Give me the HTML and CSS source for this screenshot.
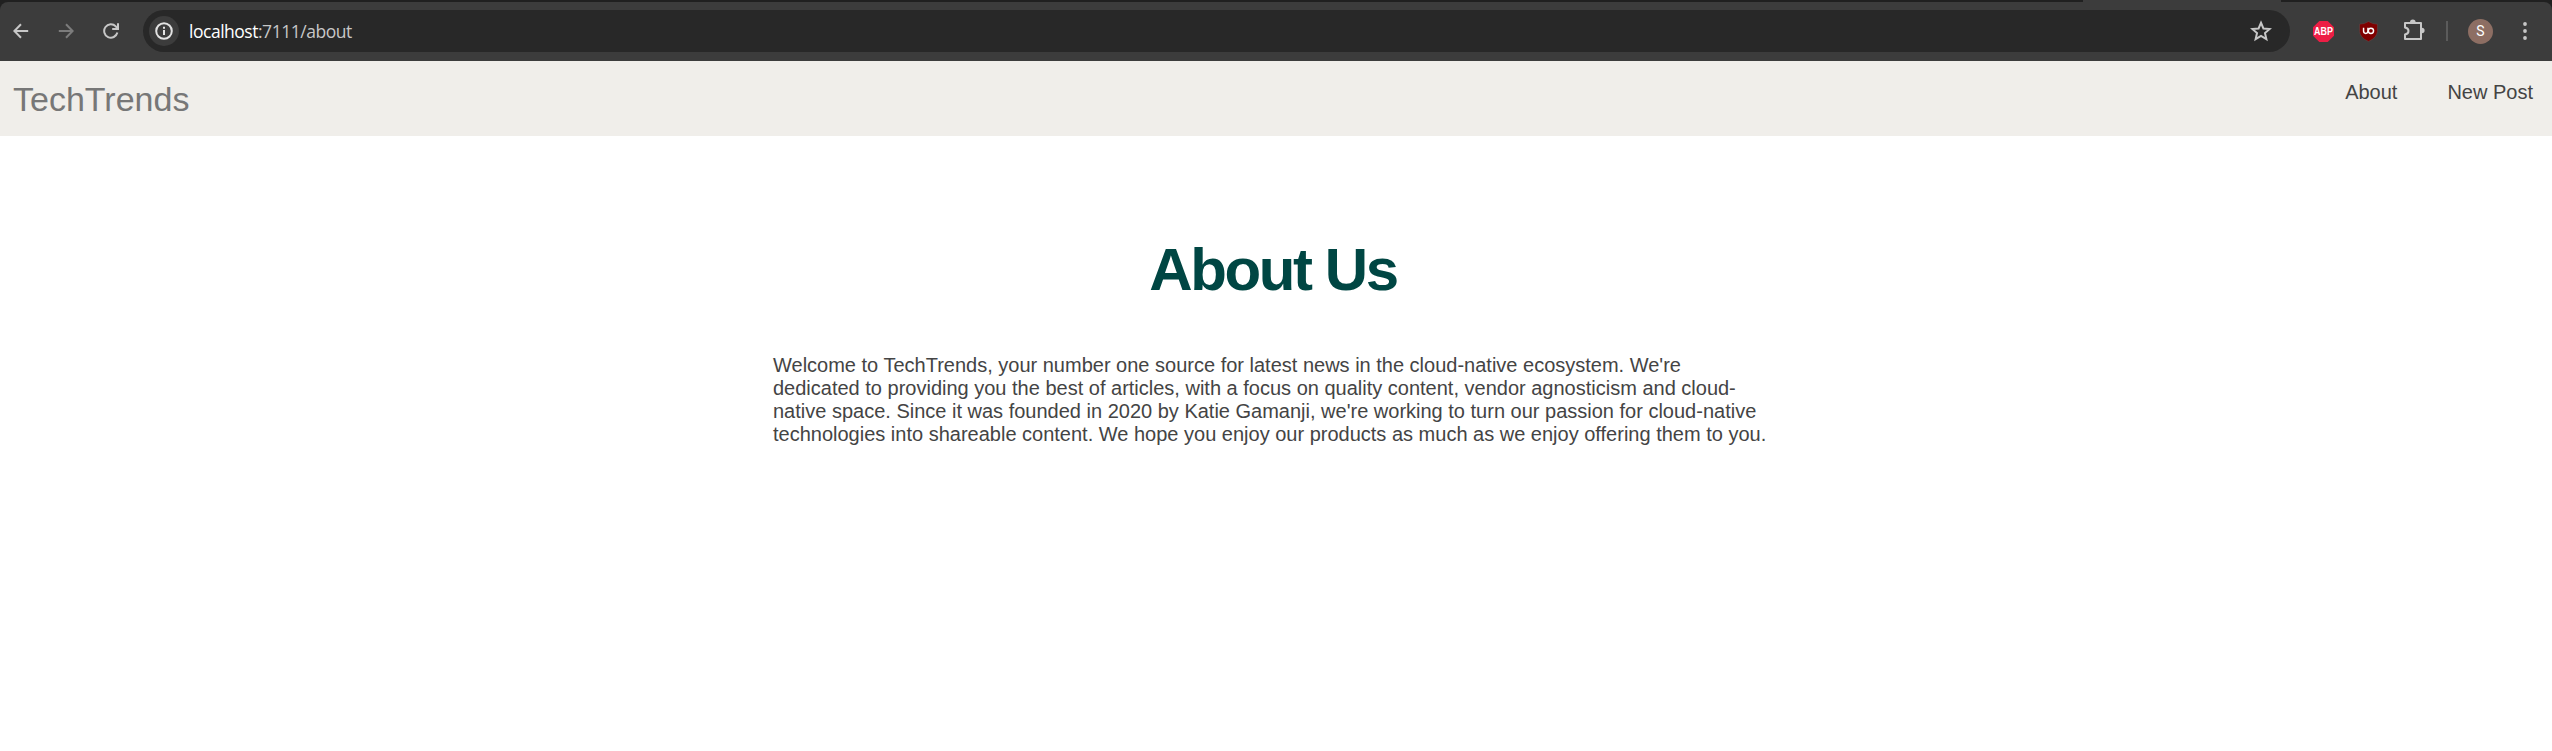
FILE: index.html
```html
<!DOCTYPE html>
<html lang="en">
<head>
<meta charset="utf-8">
<title>TechTrends</title>
<link rel="stylesheet" href="styles.css">
</head>
<body>
<div class="browser">
  <div class="tabstrip"><div class="active-tab"></div></div>
  <div class="toolbar">
    <svg class="icon back" viewBox="0 0 16 16"><path d="M15.2 8H2M8 1.3 1.4 8 8 14.7"/></svg>
    <svg class="icon forward" viewBox="0 0 16 16"><path d="M.8 8H14M8 1.3 14.6 8 8 14.7"/></svg>
    <svg class="icon reload" viewBox="0 0 16 16"><path d="M14.4 9.6A6.7 6.7 0 1 1 12.8 3.4L14.4 5.5M15 .3V6H9.2"/></svg>
    <div class="omnibox">
      <span class="site-info"><svg viewBox="0 0 18 18"><circle cx="9" cy="9" r="7.8"/><path d="M9 8V13M9 4.8V6.7"/></svg></span>
      <span class="url"><span class="host">localhost</span>:7111/about</span>
      <svg class="star" viewBox="0 0 20 20"><path d="M10 2.5 12.2 7.7 17.9 8.2 13.6 11.9 14.9 17.4 10 14.5 5.1 17.4 6.4 11.9 2.1 8.2 7.8 7.7Z"/></svg>
    </div>
    <svg class="abp" viewBox="0 0 20 20"><path d="M6 0H14L20 6V14L14 20H6L0 14V6Z"/><text x="10" y="13.8" text-anchor="middle" textLength="18" lengthAdjust="spacingAndGlyphs">ABP</text></svg>
    <svg class="shield" viewBox="0 0 18 20"><path class="plate" d="M9 .5Q13 3 17.5 3V10Q17 16 9 19.5Q1 16 .5 10V3Q5 3 9 .5Z"/><path class="mark" d="M4.3 6.4V9.6Q4.3 11.8 6.4 11.8T8.5 9.6V6.4"/><circle class="mark" cx="11.3" cy="9.3" r="2.5"/></svg>
    <svg class="puzzle" viewBox="0 0 22 22"><path class="body" d="M2 4H18V20H2V15.5Q5.5 14.8 5.5 12T2 8.5Z"/><path class="knob" d="M7 3.2A2.8 2.8 0 0 1 12.6 3.2ZM18.8 8.7A2.8 2.8 0 0 1 18.8 14.3Z"/></svg>
    <span class="divider"></span>
    <span class="avatar">S</span>
    <svg class="menu" viewBox="0 0 4 18"><circle cx="2" cy="2" r="1.9"/><circle cx="2" cy="9" r="1.9"/><circle cx="2" cy="16" r="1.9"/></svg>
  </div>
</div>
<nav class="site-nav">
  <a class="brand">TechTrends</a>
  <div class="links"><a>About</a><a>New Post</a></div>
</nav>
<main class="content">
  <h1>About Us</h1>
  <p>Welcome to TechTrends, your number one source for latest news in the cloud-native ecosystem. We're<br>dedicated to providing you the best of articles, with a focus on quality content, vendor agnosticism and cloud-<br>native space. Since it was founded in 2020 by Katie Gamanji, we're working to turn our passion for cloud-native<br>technologies into shareable content. We hope you enjoy our products as much as we enjoy offering them to you.</p>
</main>
</body>
</html>
```
FILE: styles.css
```css
* { box-sizing: border-box; }
body { margin: 0; background: #fff; color: #444; font: 20px/23px "Liberation Sans", Arial, sans-serif; }
svg { display: block; flex: none; }
.browser { height: 61px; background: #202020; }
.tabstrip { height: 2px; padding-left: 2083px; }
.active-tab { width: 198px; height: 2px; background: #3c3c3c; }
.toolbar { display: flex; align-items: center; height: 59px; padding: 0 25px 1px 13px; background: #3c3c3c; border-radius: 8px 8px 0 0; }
.icon { width: 16px; height: 16px; fill: none; stroke: #c7c7c7; stroke-width: 2; margin-right: 29px; }
.forward { stroke: #7c7c7c; }
.reload { margin-right: 24px; }
.omnibox { display: flex; align-items: center; width: 2147px; height: 42px; border-radius: 21px; background: #282828; padding: 0 18px 0 6px; }
.site-info { display: flex; align-items: center; justify-content: center; width: 30px; height: 30px; border-radius: 50%; background: #3c3c3c; margin-right: 10px; }
.site-info svg { width: 18px; height: 18px; fill: none; stroke: #e3e3e3; stroke-width: 2; }
.url { flex: 1; font: 17.5px/24px "Open Sans", "Noto Sans", sans-serif; letter-spacing: -.48px; color: #c7c7c7; }
.host { color: #fff; }
.star { width: 22px; height: 22px; fill: none; stroke: #c7c7c7; stroke-width: 1.8; }
.abp { width: 21px; height: 21px; margin-left: 23px; fill: #ed1e45; overflow: visible; }
.abp text { font: bold 10px "Liberation Sans", sans-serif; fill: #fff; }
.shield { width: 19px; height: 21px; margin-left: 25px; }
.plate { fill: #800000; stroke: #5e4444; stroke-width: .6; }
.mark { fill: none; stroke: #fff; stroke-width: 1.4; }
.puzzle { width: 22px; height: 22px; margin: -2px 0 0 25px; }
.body { fill: none; stroke: #c7c7c7; stroke-width: 2; stroke-linejoin: round; }
.knob { fill: #c7c7c7; }
.divider { width: 2px; height: 20px; background: #5b5b5b; margin-left: 21px; }
.avatar { width: 25px; height: 25px; border-radius: 50%; background: #8d6e63; color: #fff; font: 14px/25px Roboto, sans-serif; text-align: center; margin-left: 20px; }
.menu { width: 4px; height: 18px; fill: #c7c7c7; margin-left: auto; }
.site-nav { display: flex; justify-content: space-between; height: 75px; background: #f0eeea; padding: 0 19px 0 13px; }
.brand { font-size: 34px; line-height: 40px; color: #777; padding-top: 18px; }
.links { display: flex; gap: 50px; padding-top: 20px; }
.content { width: 1006px; margin: 0 auto; padding-top: 99px; }
h1 { margin: 0; padding-right: 6px; font-size: 60px; line-height: 70px; letter-spacing: -2.4px; text-align: center; color: #004643; }
p { margin: 49px 0 0; white-space: nowrap; }
```
